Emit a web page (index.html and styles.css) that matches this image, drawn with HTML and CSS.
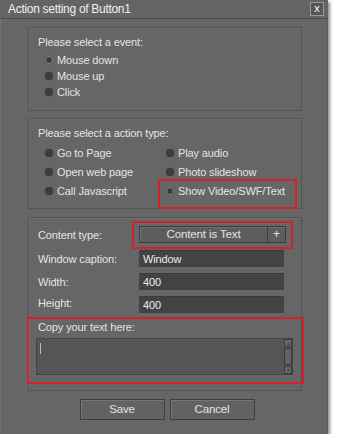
FILE: index.html
```html
<!DOCTYPE html>
<html>
<head>
<meta charset="utf-8">
<link rel="stylesheet" href="styles.css">
</head>
<body>
<div class="dialog">
  <div class="titlebar">
    <span class="title">Action setting of Button1</span>
    <span class="close">x</span>
  </div>
  <div class="content">
    <div class="group g1">
      <div class="gtitle">Please select a event:</div>
      <div class="radios">
        <div class="radio"><span class="dot on"></span>Mouse down</div>
        <div class="radio"><span class="dot"></span>Mouse up</div>
        <div class="radio"><span class="dot"></span>Click</div>
      </div>
    </div>
    <div class="group g2">
      <div class="gtitle">Please select a action type:</div>
      <div class="grid">
        <div class="radio"><span class="dot"></span>Go to Page</div>
        <div class="radio"><span class="dot"></span>Play audio</div>
        <div class="radio"><span class="dot"></span>Open web page</div>
        <div class="radio"><span class="dot"></span>Photo slideshow</div>
        <div class="radio"><span class="dot"></span>Call Javascript</div>
        <div class="radio mark"><span class="dot on"></span>Show Video/SWF/Text</div>
      </div>
    </div>
    <div class="group g3">
      <div class="row ctype">
        <span class="label">Content type:</span>
        <div class="hl">
          <div class="cbtn"><span class="cmain">Content is Text</span><span class="cplus">+</span></div>
        </div>
      </div>
      <div class="row irow first">
        <span class="label">Window caption:</span>
        <span class="input">Window</span>
      </div>
      <div class="row irow">
        <span class="label">Width:</span>
        <span class="input">400</span>
      </div>
      <div class="row irow">
        <span class="label up">Height:</span>
        <span class="input">400</span>
      </div>
      <div class="copy">
        <div class="clabel">Copy your text here:</div>
        <div class="textarea">
          <span class="caret"></span>
          <div class="scroll">
            <span class="sbtn">&#9652;</span>
            <span class="sthumb"></span>
            <span class="sbtn">&#9662;</span>
          </div>
        </div>
      </div>
    </div>
    <div class="buttons">
      <span class="btn">Save</span>
      <span class="btn">Cancel</span>
    </div>
  </div>
</div>
</body>
</html>
```

FILE: styles.css
```css
* { box-sizing: border-box; }
html, body { margin: 0; padding: 0; background: #ffffff; }
body {
  font-family: "Liberation Sans", Arial, sans-serif;
  font-size: 11px;
  letter-spacing: -0.12px;
  color: #e4e4e4;
}
.dialog {
  width: 328px;
  height: 434px;
  background: #666666;
  box-shadow: 2px 2px 3px rgba(0,0,0,0.45);
  display: flex;
  flex-direction: column;
}
.titlebar {
  height: 19px;
  border-bottom: 1px solid #4c4c4c;
  background: #646464;
  display: flex;
  align-items: center;
  justify-content: space-between;
  padding: 0 4px 0 8px;
}
.title { font-size: 12px; color: #f0f0f0; letter-spacing: -0.3px; }
.close {
  width: 14px;
  height: 14px;
  border: 1px solid #9a9a9a;
  background: #555555;
  color: #ffffff;
  font-size: 11px;
  line-height: 11px;
  text-align: center;
  letter-spacing: 0;
}
.content {
  flex: 1;
  border-left: 1px solid #747474;
  border-right: 1px solid #5a5a5a;
  padding: 8px 25px 0 27px;
  display: flex;
  flex-direction: column;
}
.group {
  border: 1px solid #535353;
  box-shadow: inset 1px 1px 0 #6e6e6e;
  padding-left: 9px;
}
.g1 { height: 84px; padding-top: 6px; }
.g2 { height: 91px; padding-top: 6px; margin-top: 7px; }
.g3 { height: 174px; padding-top: 3px; margin-top: 8px; }
.gtitle { line-height: 16px; height: 16px; }
.radios { margin-top: 2px; padding-left: 7px; }
.radio {
  height: 16px;
  display: flex;
  align-items: center;
  position: relative;
}
.dot {
  width: 8px;
  height: 8px;
  border-radius: 50%;
  background: #3d3d3d;
  box-shadow: 0 0 1px #3d3d3d;
  margin-right: 4px;
  flex: none;
}
.dot.on {
  background: #3a3a3a;
  border: 1px solid #8c8c8c;
}
.grid {
  margin-top: 2px;
  padding-left: 7px;
  display: grid;
  grid-template-columns: 121px auto;
  grid-auto-rows: 19px;
}
.grid .radio { height: 19px; }
.mark::after {
  content: "";
  position: absolute;
  left: -8px;
  top: -2px;
  width: 135px;
  height: 26px;
  border: 2px solid #d2232a;
}
.row { display: flex; align-items: center; }
.label { width: 101px; flex: none; }
.label.up { position: relative; top: -2px; }
.ctype { height: 28px; }
.hl {
  margin-left: -7px;
  width: 161px;
  height: 28px;
  border: 2px solid #d2232a;
  padding: 3px 0 0 5px;
}
.cbtn {
  width: 147px;
  height: 17px;
  border: 1px solid #3c3c3c;
  background: #5d5d5d;
  box-shadow: inset 1px 1px 0 #707070;
  display: flex;
}
.cmain {
  flex: 1;
  text-align: center;
  line-height: 15px;
  font-size: 11.5px;
  border-right: 1px solid #3c3c3c;
}
.cplus {
  width: 17px;
  text-align: center;
  line-height: 15px;
  font-size: 12px;
}
.irow { height: 17px; margin-top: 6px; }
.irow.first { margin-top: 1px; }
.input {
  width: 145px;
  height: 17px;
  background: #434343;
  border-top: 1px solid #3a3a3a;
  padding-left: 4px;
  line-height: 16px;
  color: #ececec;
}
.copy {
  margin-top: 4px;
  margin-left: -11px;
  width: 277px;
  height: 67px;
  border: 2px solid #d2232a;
  padding: 1px 0 0 9px;
}
.clabel { line-height: 14px; height: 14px; }
.textarea {
  margin-top: 4px;
  margin-left: -2px;
  width: 257px;
  height: 37px;
  background: #555555;
  border: 1px solid #444444;
  display: flex;
  justify-content: space-between;
  padding: 2px 0 0 3px;
}
.caret {
  width: 1px;
  height: 11px;
  background: #bdbdbd;
  margin-top: 2px;
}
.scroll {
  width: 8px;
  margin-top: -2px;
  display: flex;
  flex-direction: column;
  gap: 1px;
}
.sbtn {
  height: 8px;
  border: 1px solid #3a3a3a;
  background: #6a6a6a;
  font-size: 5px;
  line-height: 6px;
  text-align: center;
  color: #333;
  letter-spacing: 0;
}
.sthumb {
  flex: 1;
  border: 1px solid #3a3a3a;
  background: #626262;
}
.buttons {
  margin-top: 8px;
  display: flex;
  justify-content: center;
  gap: 5px;
  padding-left: 4px;
}
.btn {
  width: 85px;
  height: 21px;
  border: 1px solid #3e3e3e;
  background: #626262;
  box-shadow: inset 1px 1px 0 #767676;
  text-align: center;
  line-height: 19px;
  font-size: 11.5px;
}
```
